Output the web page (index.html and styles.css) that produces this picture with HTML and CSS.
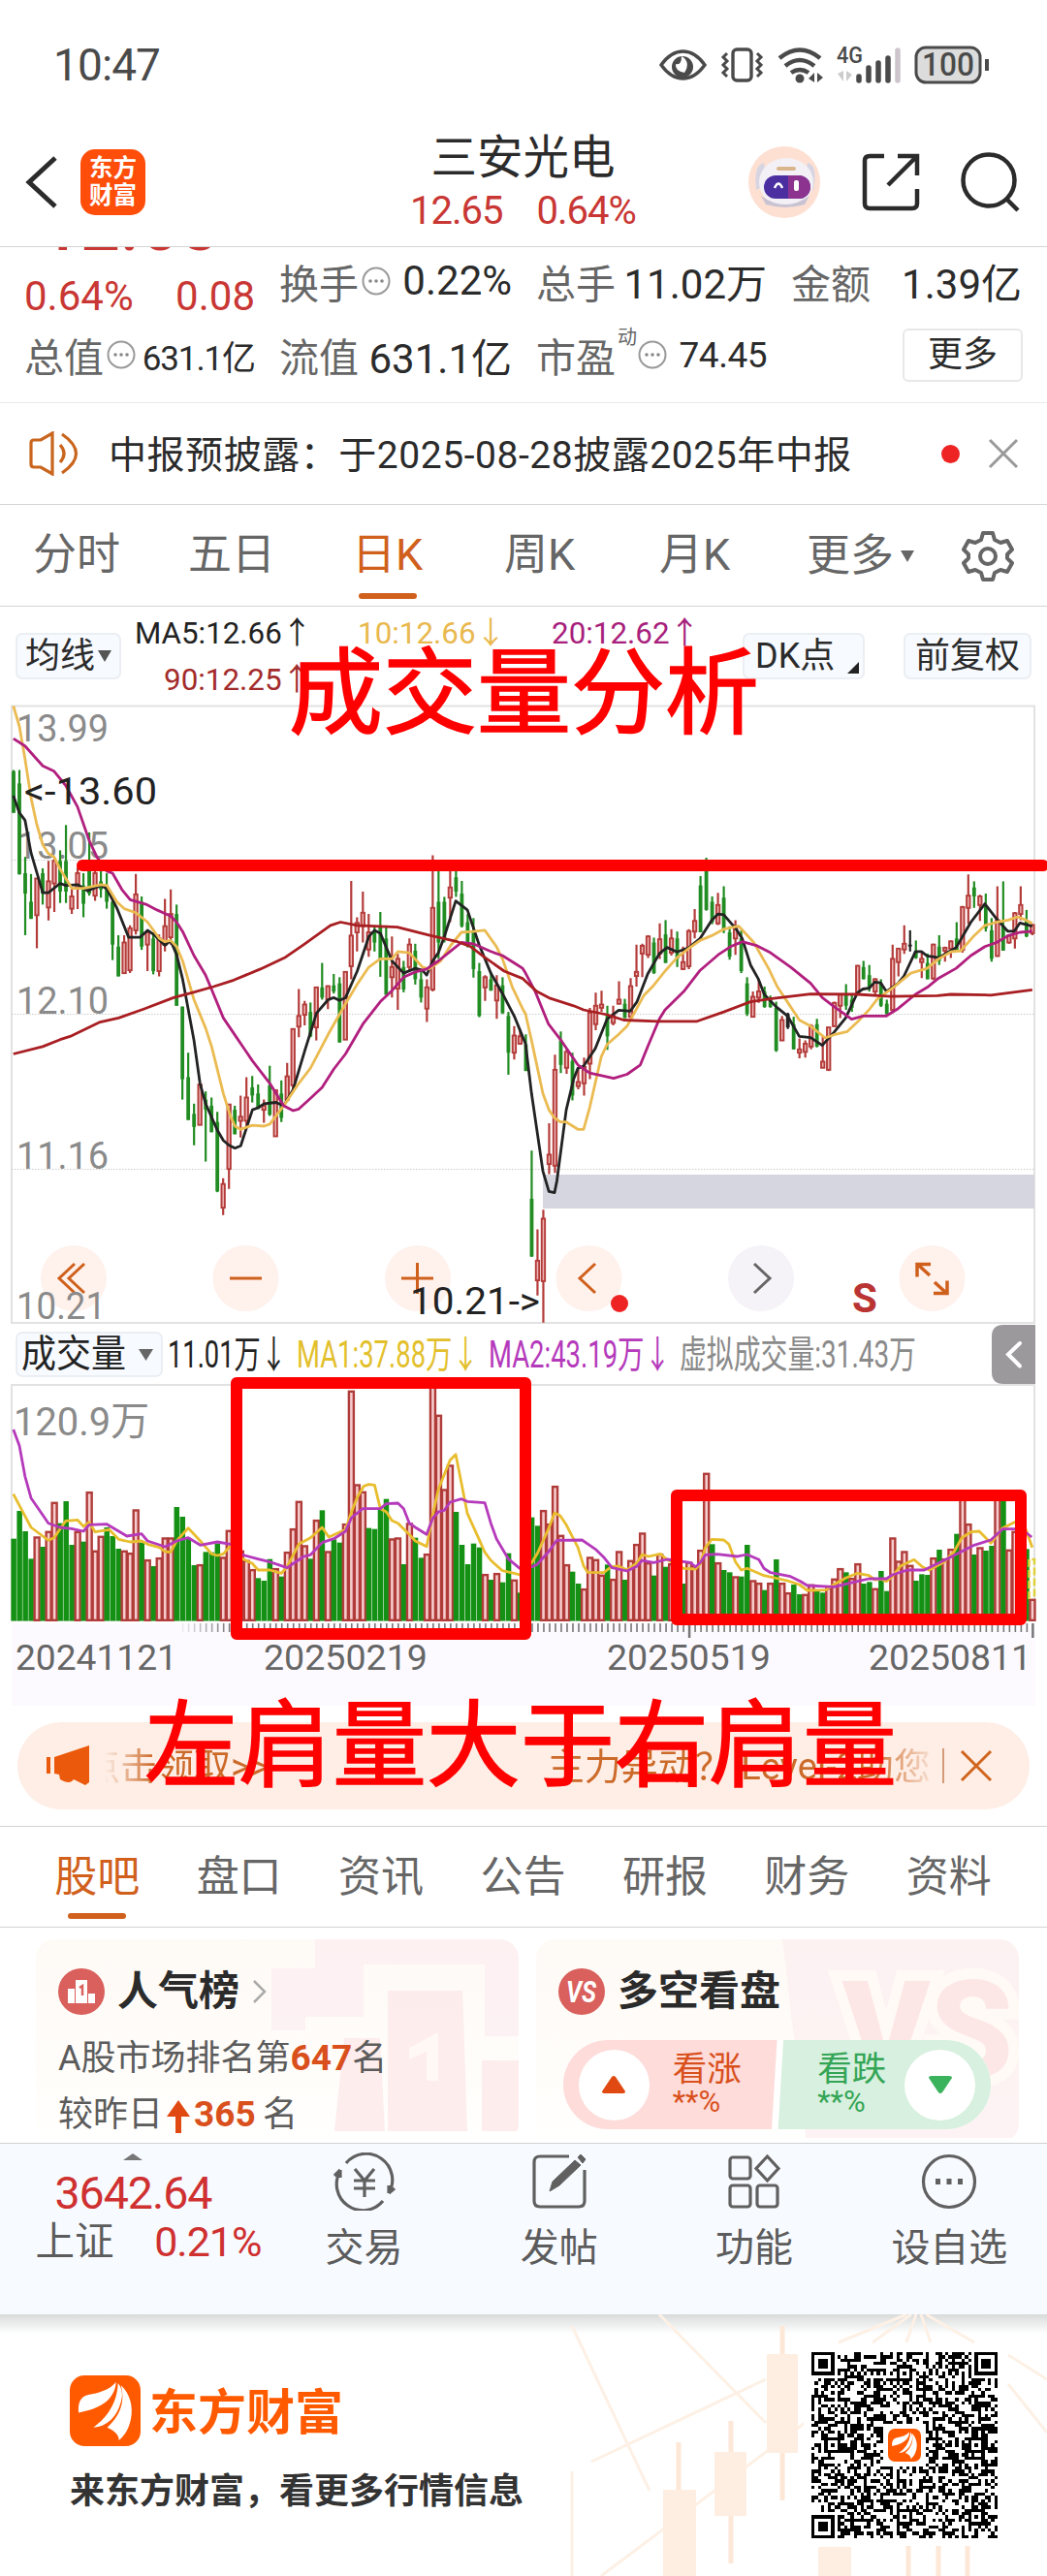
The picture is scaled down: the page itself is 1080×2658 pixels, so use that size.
FILE: index.html
```html
<!DOCTYPE html>
<html lang="zh-CN">
<head>
  <meta charset="utf-8">
  <title>三安光电 日K</title>
  <link rel="stylesheet" href="styles.css">
</head>
<body>

<svg class="defs" width="0" height="0">
  <symbol id="more-dots" viewBox="0 0 30 30">
    <circle cx="15" cy="15" r="13.5" fill="none" stroke="#999" stroke-width="2"/>
    <circle cx="9" cy="15" r="1.8" fill="#888"/><circle cx="15" cy="15" r="1.8" fill="#888"/><circle cx="21" cy="15" r="1.8" fill="#888"/>
  </symbol>
  <symbol id="east-logo" viewBox="0 0 72 72">
    <rect width="72" height="72" rx="15" fill="#ff5a00"/>
    <path d="M9 38 C8 30 10 22 18 20 C30 18 40 15 47 7 C46 24 32 34 9 38Z" fill="#fff"/>
    <path d="M24 53 C34 46 48 32 49 8 C54 14 54 21 52 27 C48 42 38 52 24 53Z" fill="#fff"/>
    <path d="M38 53 C50 42 57 28 52 10 C61 18 65 32 62 45 C60 54 56 61 50 66 C50 60 45 56 38 53Z" fill="#fff"/>
  </symbol>
</svg>

<div class="statusbar">
  <span class="clock">10:47</span>
  <svg width="344" height="44" viewBox="680 45 344 44">
    <g fill="none" stroke="#4a4a4a" stroke-width="3.4">
      <path d="M682 67 Q692 53 704.500 53 Q717 53 727 67 Q717 81 704.500 81 Q692 81 682 67Z"/>
      <rect x="756" y="51" width="19" height="32" rx="4"/>
      <path d="M750 55 l-4 4 4 4 -4 4 4 4 -4 4 4 4 M781 55 l4 4 -4 4 4 4 -4 4 4 4 -4 4" stroke-width="3"/>
      <path d="M804 60 Q825 43 846 60 M810 68 Q825 56 840 68 M816 75 Q825 69 834 75" stroke-width="4.500"/>
      <rect x="945" y="49" width="66" height="36" rx="10" fill="#dcdcdc" stroke-width="3"/>
      <path d="M1018 61 v12" stroke-width="4"/>
    </g>
    <circle cx="704" cy="69" r="11" fill="#4a4a4a"/>
    <path d="M703 58 q10 6 3 17 q-10 -2 -9 -9 q6 2 6 -8z" fill="#fff"/>
    <circle cx="825" cy="81" r="4.500" fill="#4a4a4a"/>
    <path d="M840 75 v10 l-6 -4z M843 75 v10 l6 -5z" fill="#4a4a4a"/>
    <text x="863" y="65" class="net" textLength="27" lengthAdjust="spacingAndGlyphs">4G</text>
    <path d="M870 73 v11 l-6 -8z M873 73 v11 l6 -7z" fill="#ccc"/>
    <path d="M886 79v4 M896 70v13 M906 65v18 M916 60v23" stroke="#4a4a4a" stroke-width="5.500" stroke-linecap="round"/>
    <path d="M926 52v31" stroke="#ccc6cc" stroke-width="5.500" stroke-linecap="round"/>
    <text x="951" y="78" class="batt" textLength="54" lengthAdjust="spacingAndGlyphs">100</text>
  </svg>
</div>

<header class="nav">
  <svg class="back" width="34" height="56" viewBox="0 0 34 56"><path d="M31 3 L4 28 L31 53" fill="none" stroke="#2b2b2b" stroke-width="5"/></svg>
  <div class="app-logo"><span>东方</span><span>财富</span></div>
  <div class="title">
    <div class="stock-name">三安光电</div>
    <div class="stock-sub"><span>12.65</span><span>0.64%</span></div>
  </div>
  <div class="nav-icons">
    <svg width="76" height="76" viewBox="0 0 76 76">
      <circle cx="38" cy="38" r="37" fill="#fde0d2"/>
      <path d="M9 46 q-3 -26 8 -28 l4 22z M68 46 q5 -26 -6 -28 l-5 22z" fill="#d8d5e2"/>
      <ellipse cx="40" cy="38" rx="28" ry="25" fill="#f4f1f6"/>
      <path d="M14 52 q25 18 50 0 l-5 9 q-20 6 -40 0z" fill="#c9c3d4"/>
      <rect x="30" y="22" width="20" height="4" rx="2" fill="#d9b58c"/>
      <rect x="17" y="31" width="48" height="24" rx="12" fill="#4b2fa0"/>
      <path d="M42 31 h11 a12 12 0 0 1 0 24 h-11z" fill="#8c3390"/>
      <path d="M28 44 q4 -9 8 0" fill="none" stroke="#fff" stroke-width="2.500"/>
      <rect x="48" y="36" width="5" height="11" rx="2" fill="#fff"/>
    </svg>
    <svg width="62" height="62" viewBox="0 0 62 62" fill="none" stroke="#2b2b2b" stroke-width="4.500">
      <path d="M24 4 H9 Q4 4 4 9 V53 Q4 58 9 58 H53 Q58 58 58 53 V38 M38 4 H58 V24 M58 4 L28 34"/>
    </svg>
    <svg width="62" height="62" viewBox="0 0 62 62" fill="none" stroke="#2b2b2b" stroke-width="4.500">
      <circle cx="29" cy="29" r="26.500"/><path d="M46 47 L59 60"/>
    </svg>
  </div>
</header>

<section class="quote">
  <div class="big-price">12.65</div>
  <div class="cells">
    <div class="cell up"><span class="pct">0.64%</span><span>0.08</span></div>
    <div class="cell top"><label>换手</label><svg class="dots"><use href="#more-dots"/></svg><b>0.22%</b></div>
    <div class="cell top"><label>总手</label><b>11.02万</b></div>
    <div class="cell top"><label>金额</label><b>1.39亿</b></div>
    <div class="cell"><label>总值</label><svg class="dots"><use href="#more-dots"/></svg><b class="small">631.1亿</b></div>
    <div class="cell"><label>流值</label><b>631.1亿</b></div>
    <div class="cell"><label>市盈<sup>动</sup></label><svg class="dots after-sup"><use href="#more-dots"/></svg><b class="pe">74.45</b></div>
    <div class="cell end"><button class="more">更多</button></div>
  </div>
</section>

<section class="notice">
  <svg width="54" height="46" viewBox="0 0 54 46" fill="none" stroke="#c9651d" stroke-width="3.200">
    <path d="M3 12 Q3 9 6 9 H13 L25 2 V44 L13 37 H6 Q3 37 3 34Z M33 14 Q41 23 33 32 M35 3 Q64 23 35 43"/>
  </svg>
  <p>中报预披露：于2025-08-28披露2025年中报</p>
  <i class="dot"></i>
  <svg width="32" height="32" viewBox="0 0 32 32"><path d="M2 2 L30 30 M30 2 L2 30" stroke="#999" stroke-width="3"/></svg>
</section>

<nav class="period">
  <a>分时</a><a>五日</a><a class="active">日K</a><a>周K</a><a>月K</a><a class="has-more">更多</a>
  <svg class="gear" width="54" height="54" viewBox="0 0 54 54" fill="none" stroke="#666" stroke-width="4" stroke-linejoin="round">
    <path d="M22 3 H32 L34 10 L40 13 L47 11 L52 20 L47 25 V29 L52 34 L47 43 L40 41 L34 44 L32 51 H22 L20 44 L14 41 L7 43 L2 34 L7 29 V25 L2 20 L7 11 L14 13 L20 10Z"/>
    <circle cx="27" cy="27" r="8"/>
  </svg>
</nav>

<section class="ma-row">
  <button class="chip ma-chip">均线<i class="tri"></i></button>
  <svg width="600" height="90" viewBox="130 632 600 90" class="legend">
    <text x="139" y="664" textLength="183" lengthAdjust="spacingAndGlyphs" fill="#222">MA5:12.66↑</text>
    <text x="369" y="664" textLength="153" lengthAdjust="spacingAndGlyphs" fill="#e9b84e">10:12.66↓</text>
    <text x="569" y="664" textLength="153" lengthAdjust="spacingAndGlyphs" fill="#a81f7c">20:12.62↑</text>
    <text x="169" y="712" textLength="153" lengthAdjust="spacingAndGlyphs" fill="#a32b2b">90:12.25↑</text>
  </svg>
  <button class="chip dk">DK点<i class="corner"></i></button>
  <button class="chip fq">前复权</button>
  <div class="mark mark-top">成交量分析</div>
</section>

<svg id="chart" width="1080" height="1037" viewBox="0 727 1080 1037"></svg>

<section class="promo">
  <svg width="48" height="42" viewBox="0 0 48 42" fill="#eb5a0c"><path d="M0 12h4v17H0z M8 12 L44 0 V38 L40 41 L28 35 Q24 41 14 35 L13 30 L8 29Z"/></svg>
  <div class="ticker"><span>点击领取&gt;&gt;</span><span>主力异动？ Level-2助您</span></div>
  <i class="bar"></i>
  <svg width="34" height="34" viewBox="0 0 34 34"><path d="M2 2 L32 32 M32 2 L2 32" stroke="#d0641c" stroke-width="3"/></svg>
  <div class="mark mark-bottom">左肩量大于右肩量</div>
</section>

<nav class="info-tabs">
  <a class="active">股吧</a><a>盘口</a><a>资讯</a><a>公告</a><a>研报</a><a>财务</a><a>资料</a>
</nav>

<section class="cards">
  <div class="card rank">
    <h3>
      <svg width="48" height="48" viewBox="0 0 48 48"><circle cx="24" cy="24" r="24" fill="#d9605c"/><path d="M10 21h7v15h-7z M31 26h7v10h-7z M18 12h12v24H18z" fill="#fff"/><path d="M22 20 l3 -2 v10" stroke="#d9605c" stroke-width="2.500" fill="none"/></svg>
      人气榜
      <svg width="16" height="26" viewBox="0 0 16 26"><path d="M2 2 L13 13 L2 24" fill="none" stroke="#aaa" stroke-width="2.500"/></svg>
    </h3>
    <p>A股市场排名第<b>647</b>名</p>
    <p class="second">较昨日<svg width="26" height="34" viewBox="0 0 26 34"><path d="M13 0 L25 17 H16 V34 H10 V17 H1Z" fill="#e04a12"/></svg><b>365</b>&thinsp;名</p>
    <svg class="art" width="260" height="205" viewBox="0 0 260 205">
      <path d="M50 0 h210 v100 h-35 v-74 h-125 v54 h-60 v14 h-35 v-64 h45z" fill="#fdeff1" opacity=".8"/>
      <path d="M125 53 h77 l5 145 h-82z M80 102 h37 l5 96 h-52z M222 125 h38 v73 h-38z" fill="#fde9e9" opacity=".8"/>
      <path d="M147 112 l30 -16 v50 h-12 v-30 l-18 8z" fill="#fff8f5"/>
    </svg>
  </div>
  <div class="card versus">
    <h3>
      <svg width="48" height="48" viewBox="0 0 48 48"><circle cx="24" cy="24" r="24" fill="#d9605c"/><text x="8" y="35" class="vs" textLength="31" lengthAdjust="spacingAndGlyphs">VS</text></svg>
      多空看盘
    </h3>
    <svg class="art" width="250" height="205" viewBox="0 0 250 205"><path d="M6 0h244v205H30z" fill="#fdf0f1" opacity=".8"/><text x="68" y="142" class="vs-big" textLength="176" lengthAdjust="spacingAndGlyphs">VS</text></svg>
    <div class="poll">
      <div class="half rise"><i><svg width="26" height="20"><path d="M11 2 Q13 0 15 2 L25 17 Q25 19 22 19 H4 Q1 19 1 17Z" fill="#e04a12"/></svg></i><span>看涨<small>**%</small></span></div>
      <div class="half fall"><span>看跌<small>**%</small></span><i><svg width="26" height="20"><path d="M11 18 Q13 20 15 18 L25 3 Q25 1 22 1 H4 Q1 1 1 3Z" fill="#3bb25c"/></svg></i></div>
    </div>
  </div>
</section>

<footer class="toolbar">
  <div class="index">
    <i></i>
    <strong>3642.64</strong>
    <div><span>上证</span><em>0.21%</em></div>
  </div>
  <a>
    <svg width="66" height="60" viewBox="0 0 66 60"><path d="M14 11 A27 27 0 0 1 58 42 M52 50 A27 27 0 0 1 8 19 M8 18 l-6 6 M8 18 v8 M58 42 l6 -5 M58 42 v-8 M23 17 l10 12 10 -12 M33 29 v17 M22 29 h22 M22 37 h22"/></svg>
    交易
  </a>
  <a>
    <svg width="60" height="60" viewBox="0 0 60 60"><path d="M40 4 H10 Q4 4 4 10 V50 Q4 56 10 56 H50 Q56 56 56 50 V18"/><path d="M20 40 L23 30 L46 8 L52 13 L30 34Z M49 5 l3 -3 5 5 -3 4z" fill="#606060" stroke-width="1"/></svg>
    发帖
  </a>
  <a>
    <svg width="60" height="60" viewBox="0 0 60 60"><rect x="5" y="5" width="21" height="22" rx="3"/><rect x="5" y="34" width="21" height="22" rx="3"/><rect x="33" y="34" width="21" height="22" rx="3"/><path d="M43.500 4 L55 16.500 L43.500 29 L32 16.500Z"/></svg>
    功能
  </a>
  <a>
    <svg width="60" height="60" viewBox="0 0 60 60"><circle cx="30" cy="30" r="26.500"/><path d="M16 30h5 M27.500 30h5 M39 30h5" stroke-width="6"/></svg>
    设自选
  </a>
</footer>

<section class="brand">
  <svg class="brand-art" width="500" height="270" viewBox="580 2388 500 270">
    <g stroke="#fdf0e5" stroke-width="3" fill="none">
      <path d="M680 2388 L790 2500 M590 2400 L670 2570 M610 2540 L790 2455 M590 2550 V2658 M620 2658 L830 2500 M1040 2430 L1080 2455 M1040 2460 L1080 2510 M935 2388 L865 2417 M940 2388 L900 2417 M945 2388 L935 2417 M950 2388 L960 2417 M955 2388 L1005 2417"/>
      <path d="M807 2400 V2580 M754 2498 V2645 M700 2520 V2658 M937 2625 V2658 M968 2625 V2658 M998 2625 V2658" stroke-width="5" stroke="#fde8d8"/>
    </g>
    <path d="M791 2429h32v102h-32z M737 2530h33v66h-33z M684 2569h34v89h-34z M844 2628h34v30h-34z" fill="#feeee2"/>
  </svg>
  <div class="brand-text">
    <div class="brand-name"><svg width="73" height="73"><use href="#east-logo"/></svg><span>东方财富</span></div>
    <p>来东方财富，看更多行情信息</p>
  </div>
  <svg id="qr" width="208" height="208" viewBox="0 0 208 208"></svg>
</section>

<script src="chart.js"></script>
</body>
</html>
```
FILE: styles.css
```css
body {
  margin: 0;
  width: 1080px;
  height: 2658px;
  background: #fff;
  overflow: hidden;
  font-family: Roboto, "Noto Sans CJK SC", sans-serif;
  color: #2b2b2b;
}

svg {
  display: block;
  flex: none;
}

button {
  font-family: inherit;
  color: #2b2b2b;
  padding: 0;
}

.defs { position: absolute; }

.statusbar {
  height: 134px;
  box-sizing: border-box;
  padding: 0 56px 0 55px;
  display: flex;
  align-items: center;
  justify-content: space-between;
}

.clock {
  font-size: 46px;
  letter-spacing: -.9px;
  color: #4a4a4a;
}

.net { font-size: 23px; font-weight: 500; fill: #4a4a4a; }
.batt { font-size: 34px; font-weight: 500; fill: #4a4a4a; }

.nav {
  height: 121px;
  display: flex;
  align-items: center;
  border-bottom: 1px solid #d4d4d4;
  box-sizing: border-box;
  padding: 0 27px 12px 26px;
  position: relative;
  z-index: 1;
  background: #fff;
}

.back { margin-right: 23px; }

.app-logo {
  width: 67px;
  height: 68px;
  border-radius: 15px;
  background: #ff4d0a;
  color: #fff;
  font-size: 24.500px;
  font-weight: bold;
  line-height: 28px;
  display: flex;
  flex-direction: column;
  align-items: center;
  justify-content: center;
}

.title {
  flex: 1;
  text-align: center;
  padding: 3px 0 0 158px;
}

.stock-name {
  font-size: 47.500px;
  line-height: 56px;
}

.stock-sub {
  display: flex;
  justify-content: center;
  gap: 35px;
  font-size: 40px;
  line-height: 54px;
  letter-spacing: -1px;
  color: #c93734;
}

.nav-icons {
  display: flex;
  align-items: center;
  gap: 41px;
}

.quote {
  height: 161px;
  border-bottom: 1px solid #e9e9e9;
  box-sizing: border-box;
  overflow: hidden;
}

.big-price {
  height: 5px;
  line-height: 5px;
  margin-left: 42px;
  font-size: 72px;
  font-weight: 500;
  color: #c93734;
  position: relative;
  top: -24px;
}

.cells {
  display: grid;
  grid-template-columns: 238px 240px 238px 238px;
  grid-template-rows: 69px 74px;
  column-gap: 25px;
  padding-left: 25px;
}

.cell {
  display: flex;
  align-items: center;
  justify-content: space-between;
  font-size: 41px;
  color: #2b2b2b;
}

.cell label { color: #666; position: relative; }
.cell b { font-weight: normal; font-size: 42px; }
.cell .small { font-size: 35px; letter-spacing: -1.1px; }
.cell .pe { font-size: 37px; letter-spacing: -.5px; }
.cell.top { padding-bottom: 10px; }
.cell.up { color: #c93734; padding-top: 21px; font-size: 42px; }
.cell.end { justify-content: flex-end; }

.cell sup {
  position: absolute;
  right: -22px;
  top: -4px;
  font-size: 20px;
}

.cell .dots {
  width: 30px;
  height: 30px;
  margin-right: auto;
  margin-left: 3px;
}

.cell .after-sup { margin-left: 23px; }

.more {
  width: 124px;
  height: 55px;
  border: 2px solid #e8e8e8;
  border-radius: 6px;
  background: #fff;
  font-size: 36px;
  line-height: 48px;
  margin-right: -1px;
}

.notice {
  height: 105px;
  box-sizing: border-box;
  border-bottom: 1px solid #d4d4d4;
  display: flex;
  align-items: center;
  padding: 0 29px;
}

.notice p {
  margin: -5px 0 0 29px;
  font-size: 39px;
  white-space: nowrap;
  letter-spacing: .55px;
}

.dot {
  width: 19px;
  height: 19px;
  border-radius: 50%;
  background: #ee2424;
  margin: 0 29px 0 auto;
}

.period {
  height: 105px;
  box-sizing: border-box;
  border-bottom: 1px solid #d4d4d4;
  display: grid;
  grid-template-columns: 160px 169px 157px 160px 152px 160px auto;
  align-items: center;
  justify-items: start;
  padding-left: 34px;
  font-size: 45px;
  color: #666;
}

.period a {
  height: 105px;
  line-height: 104px;
}

.period .has-more {
  display: flex;
  align-items: center;
}

.has-more::after {
  content: "";
  border: 7px solid transparent;
  border-top: 12px solid #666;
  border-bottom: 0;
  margin-left: 7px;
}

.active {
  color: #d0601c;
  position: relative;
}

.active::after {
  content: "";
  position: absolute;
  left: 50%;
  bottom: 8px;
  width: 60px;
  height: 6px;
  margin-left: -30px;
  border-radius: 3px;
  background: #d0601c;
}

.ma-row {
  height: 101px;
  display: flex;
  align-items: flex-start;
  position: relative;
  padding-left: 16px;
}

.chip {
  margin-top: 27px;
  height: 48px;
  border: 2px solid #ebeef2;
  border-radius: 7px;
  background: #f7faff;
  font-size: 36px;
  line-height: 44px;
  white-space: nowrap;
  box-sizing: border-box;
  position: relative;
}

.ma-chip {
  width: 109px;
  display: flex;
  align-items: center;
  justify-content: center;
  gap: 3px;
}

.tri {
  border: 7px solid transparent;
  border-top: 12px solid #555;
  border-bottom: 0;
}

.legend {
  margin: 6px 0 0 5px;
  font-size: 32px;
}

.dk {
  width: 126px;
  margin-left: 36px;
  text-align: left;
  padding-left: 11px;
}

.corner {
  position: absolute;
  right: 4px;
  bottom: 4px;
  border-left: 12px solid transparent;
  border-bottom: 12px solid #222;
}

.fq { width: 132px; margin-left: 40px; }

.mark {
  position: absolute;
  color: #f00;
  font-size: 97px;
  line-height: 100px;
  white-space: nowrap;
  z-index: 3;
  -webkit-text-stroke: 1.500px #f00;
}

.mark-top { left: 298px; top: 40px; }
.mark-bottom { left: 131px; top: -25px; }

#chart { font-family: Roboto, "Noto Sans CJK SC", sans-serif; }
#chart .axis { font-size: 39px; fill: #8a8a8a; }
#chart .big { font-size: 41px; }
#chart .tip { font-size: 39px; fill: #222; }
#chart .vol { font-size: 39px; }
#chart .date { font-size: 37px; fill: #666; }
#chart .sell { font-size: 42px; font-weight: bold; fill: #b93432; }

.promo {
  margin: 13px 18px 0;
  height: 90px;
  border-radius: 45px;
  background: #feeee6;
  display: flex;
  align-items: center;
  padding: 0 38px 0 30px;
  position: relative;
}

.ticker {
  flex: 1;
  margin: -5px 12px 0;
  display: flex;
  justify-content: space-between;
  overflow: hidden;
  font-size: 38px;
  color: #cc6a2a;
  -webkit-mask-image: linear-gradient(90deg, transparent, #000 50px, #000 790px, transparent 860px);
}

.ticker span { white-space: nowrap; }
.ticker span:first-child { margin-left: -22px; }

.bar {
  width: 2px;
  height: 36px;
  background: #d59a78;
  margin-right: 16px;
}

.info-tabs {
  margin-top: 17px;
  height: 105px;
  box-sizing: border-box;
  border-top: 1px solid #d4d4d4;
  border-bottom: 1px solid #d4d4d4;
  padding: 0 28px 0 27px;
  display: flex;
  font-size: 44px;
  color: #666;
}

.info-tabs a {
  flex: 1;
  text-align: center;
  line-height: 104px;
}

.cards {
  height: 223px;
  box-sizing: border-box;
  padding: 12px 28px 0 37px;
  display: flex;
  gap: 18px;
  border-bottom: 1px solid #cfd0d4;
  overflow: hidden;
}

.card {
  width: 498px;
  height: 210px;
  border-radius: 20px;
  background: linear-gradient(180deg, #fefaf6, #fffdfa 70%, #fff);
  box-sizing: border-box;
  padding: 23px 23px 0;
  position: relative;
  overflow: hidden;
}

.card h3 {
  margin: 0 0 19px;
  font-size: 42px;
  line-height: 62px;
  display: flex;
  align-items: center;
  gap: 13px;
  position: relative;
  z-index: 1;
}

.card p {
  margin: 0;
  font-size: 36px;
  line-height: 38px;
  color: #5c5c5c;
  display: flex;
  align-items: center;
  position: relative;
  z-index: 1;
}

.card .second { margin-top: 19px; }
.card p b { color: #d9501c; font-size: 37px; }
.card p svg { margin: 5px 3px 0; }

.art {
  position: absolute;
  right: 0;
  top: 0;
}

.vs { font-size: 31px; font-weight: bold; font-style: italic; fill: #fff; }

.vs-big {
  font-size: 140px;
  font-weight: 900;
  fill: #fde6e6;
  stroke: #fffaf5;
  stroke-width: 22px;
  paint-order: stroke;
}

.poll {
  position: relative;
  z-index: 1;
  width: 441px;
  height: 92px;
  margin: 3px 0 0 5px;
  border-radius: 46px;
  overflow: hidden;
  display: flex;
  background: #fff;
}

.half {
  width: 221px;
  display: flex;
  align-items: center;
  justify-content: center;
  gap: 24px;
  box-sizing: border-box;
  font-size: 35.500px;
}

.half span { line-height: 38px; margin-top: -3px; }
.half small { display: block; font-size: 31px; line-height: 30px; }
.half i {
  width: 73px;
  height: 73px;
  border-radius: 50%;
  background: #fff;
  display: flex;
  align-items: center;
  justify-content: center;
}

.rise { background: #fddcda; color: #d9501c; padding-right: 21px; clip-path: polygon(0 0, 100% 0, 97.500% 100%, 0 100%); }
.fall { background: #d8f0df; color: #34a556; padding-left: 26px; gap: 19px; clip-path: polygon(3% 0, 100% 0, 100% 100%, .5% 100%); }

.toolbar {
  height: 176px;
  background: #f7faff;
  display: flex;
  color: #5c5c5c;
}

.index {
  width: 275px;
  display: flex;
  flex-direction: column;
  align-items: center;
  color: #cf3030;
}

.index i {
  border: 10px solid transparent;
  border-top: 0;
  border-bottom: 7px solid #777;
  margin-top: 10px;
}

.index strong {
  font-weight: normal;
  font-size: 46.500px;
  line-height: 58px;
  letter-spacing: -1px;
  margin-top: 5px;
}

.index div {
  width: 233px;
  margin-left: 31px;
  display: flex;
  justify-content: space-between;
  font-size: 40.500px;
  line-height: 43px;
}

.index span { color: #5c5c5c; }
.index em { font-style: normal; font-size: 43px; letter-spacing: -1px; }

.toolbar a {
  width: 201.300px;
  display: flex;
  flex-direction: column;
  align-items: center;
  font-size: 40px;
  line-height: 48px;
  padding-top: 9px;
}

.toolbar a svg {
  fill: none;
  stroke: #606060;
  stroke-width: 3.200;
  margin-bottom: 15px;
}

.brand {
  height: 270px;
  background: linear-gradient(180deg, #d9dbdb, #fff 20px);
  display: flex;
  justify-content: space-between;
  position: relative;
}

.brand-art {
  position: absolute;
  right: 0;
  top: 0;
}

.brand-text { padding: 63px 0 0 72px; }

.brand-name {
  display: flex;
  align-items: center;
  gap: 9px;
  font-size: 50px;
  font-weight: bold;
  color: #ff5a00;
  height: 73px;
}

.brand-name span { margin-top: -5px; }

.brand p {
  margin: 17px 0 0;
  font-size: 36px;
  font-weight: bold;
  color: #333;
}

#qr {
  margin: 31px 43px 0 0;
  position: relative;
}
```
FILE: chart.js
```js
const X0 = 14, STEP = 6.005;
const LX = 2.9037, LY = 2.3758;

// price bars: colour (g/r/k), high, top, bottom, low
const bars = `g177,180,282,282 g177,210,433,433 g390,430,480,582 g432,500,542,542 r443,443,533,614 g418,430,480,507 r400,450,514,546 r395,400,455,525
g374,400,475,503 g312,400,475,503 r468,487,517,530 r415,430,465,518 g430,460,505,538 g330,400,480,485 r425,430,485,498 g425,450,470,490
g430,460,500,517 g495,500,605,643 g582,610,683,683 r582,600,675,675 r558,565,668,675 r432,482,570,580 g487,500,610,618 r568,575,605,670
g575,590,670,678 r580,590,670,683 r493,560,605,622 r470,530,587,605 g507,530,755,755 g757,757,935,985 g870,930,1035,1035 g995,1020,1052,1097
r948,948,1047,1047 g965,985,1010,1137 g980,1000,1065,1065 g1015,1040,1210,1212 r1178,1192,1250,1268 r997,997,1155,1204 g1000,1010,1070,1070 r975,1027,1037,1078
r930,980,1037,1050 g927,955,975,992 g948,970,1008,1008 r985,1000,1010,1042 g902,950,1022,1025 r962,962,1075,1075 g938,970,1030,1040 r895,928,985,990
r812,812,950,960 r714,780,806,832 r743,752,777,803 g747,770,830,832 r710,710,808,840 g650,710,735,740 r705,707,740,763 g677,705,720,725
g685,700,845,845 r672,672,838,838 r449,583,658,690 r538,552,575,622 r475,527,560,600 r530,575,617,635 g560,575,600,622 g525,560,640,684
g558,590,728,728 r585,660,685,735 r628,640,713,765 g645,660,715,722 r590,605,660,672 g603,620,690,703 g670,690,735,747 r690,710,762,795
r386,515,715,720 g425,500,600,640 g488,500,590,600 r425,465,490,550 g398,440,475,488 g449,480,560,563 g530,550,605,612 g540,570,665,686
g650,670,780,783 r680,685,710,743 g672,690,718,718 r680,705,742,787 g685,705,773,775 g770,780,870,924 r805,828,870,887 r812,830,848,850
g825,850,915,915 g1110,1228,1370,1370 r1303,1380,1428,1465 r1255,1277,1430,1532 r1043,1120,1143,1168 r875,912,1147,1165 g818,840,900,920 r862,868,907,922
g870,890,975,987 r905,942,952,960 r882,905,945,975 r760,772,897,935 r723,755,800,815 r718,752,760,770 g755,775,830,863 r755,780,797,803
r695,740,750,752 g738,750,785,785 r687,707,782,785 r605,672,682,708 r603,608,627,685 r582,585,630,638 g588,600,675,677 r553,592,627,640
g545,580,650,650 r567,590,625,632 g573,590,640,660 r610,648,665,667 r567,572,658,665 r518,547,573,590 g437,460,575,575 g392,420,520,522
g487,500,550,555 r478,508,553,557 g462,490,570,577 g560,575,635,642 r545,560,590,630 g570,590,670,675 g685,700,775,780 r720,733,782,782
r690,720,735,748 g708,720,758,760 g730,740,758,760 g745,760,865,868 r780,790,840,840 k772,775,808,812 g782,800,862,862 r835,862,870,884
r840,848,868,882 r800,805,855,862 g787,800,855,857 r830,892,907,907 r808,808,912,915 r745,748,805,807 r725,727,755,785 g702,725,755,765
g725,740,760,770 r655,657,725,727 g645,660,690,690 g655,680,712,720 r687,690,720,727 g690,700,755,758 g740,750,775,780 r605,640,765,770
r613,615,648,683 r558,603,617,628 k570,605,608,622 g595,620,638,640 r622,640,648,687 g627,650,690,690 r603,605,688,692 g582,610,645,655
r610,613,620,647 r595,597,615,638 g550,590,620,620 r510,513,618,625 r433,485,515,555 g450,465,487,515 r483,487,508,547 g480,510,565,573
g540,570,640,647 r462,545,633,635 g450,560,620,620 r580,583,600,603 r525,528,590,615 r462,508,530,545 g520,545,585,587 r555,557,577,582`.split(/\s+/);

// volume bar tops
const vols = `g683 g597 g660 g745 r677 g708 r660 r570 g635 g567 g702 r660 g692 r538 r720 r675 g648 g675 g714 r720 r727 r593 g695 r748 g768 r742 r680 r680 g585 g615 g680 g765
r763 g724 g725 g698 r740 r657 g700 r720 r750 r778 g805 g813 g746 r775 g800 r724 r652 r567 r704 g745 r625 g595 r722 g685 g695 r637 r225 r515 r537 g650 g653 g590
g560 r683 r680 g762 r635 g680 g742 r730 r207 r300 r530 r455 g600 g702 g762 g698 g710 r793 g810 r790 g818 g728 r810 g850 g760 g617 g643 r595 r637 r520 r672 r763
g785 g822 r838 r740 r747 r795 g763 r808 r722 g810 r750 r700 r665 r757 g797 r730 g770 r760 r750 g822 r755 r768 r718 r480 g700 r757 g780 g787 r800 g800 g702 r812
r820 g842 r820 g747 r820 r850 g825 g855 r855 r825 g845 g850 r835 r807 r775 g787 r805 r760 g822 g817 r837 g783 g845 r680 r752 r722 r765 g813 g793 g795 r742 g717
r745 r715 g668 r545 r637 g732 r710 g720 g705 r540 g545 r717 r660 r680 g715 r870`.split(/\s+/);

// each line is two halves, the right half starts at x = 540
const priceLines = [
  ['#232323', '40,240 58,282 75,300 93,380 128,478 145,478 180,455 197,460 232,458 262,473 302,460 320,468 350,515 385,587 420,587 442,570 460,580 494,607 511,595 529,630 547,690 581,840 599,945 616,995 651,1060 669,1085 686,1097 704,1104 721,1098 756,1010 773,1005 791,995 826,992 850,1000 878,960 913,865 948,773 983,740 1000,735 1017,742 1035,735 1070,670 1105,585 1122,570 1139,577 1174,645 1209,675 1244,663 1265,668 1278,680 1296,645 1313,625 1331,585 1365,498 1400,520 1435,605 1470,675 1505,725 1540,780 1565,830',
    '6,848 24,970 58,1160 76,1210 93,1213 100,1185 128,1010 150,935 163,908 180,903 215,860 250,788 285,766 320,768 340,745 372,677 407,627 430,612 460,623 494,613 529,590 564,545 583,530 600,532 635,565 655,590 680,655 704,690 721,727 756,757 791,780 826,830 860,833 895,852 930,820 965,785 1000,723 1017,714 1035,712 1052,697 1070,699 1087,720 1122,700 1139,683 1174,622 1192,622 1209,633 1244,637 1296,612 1340,550 1382,505 1417,542 1450,572 1470,572 1487,552 1524,560'],
  ['#ebbb52', '40,20 58,70 75,150 93,245 110,310 128,360 145,382 162,390 180,420 215,467 250,467 302,458 320,460 350,500 372,517 407,527 442,550 477,590 494,598 511,595 529,610 547,645 581,740 616,810 634,855 669,970 690,1025 704,1050 720,1058 756,1048 791,1050 808,1045 850,1000 895,945 930,908 983,825 1035,750 1070,702 1105,660 1139,640 1174,640 1192,622 1226,625 1265,660 1285,665 1320,645 1350,607 1382,575 1417,573 1452,570 1487,610 1505,640 1535,710 1565,762',
    '6,775 24,840 58,970 76,1010 93,1030 110,1040 128,1040 163,1058 180,1058 198,1005 233,880 250,850 285,825 310,805 360,730 390,705 424,670 460,637 494,615 529,595 564,583 600,567 645,560 690,600 735,665 760,708 790,745 826,790 860,805 904,834 930,826 970,818 1000,795 1035,765 1060,738 1105,712 1160,675 1209,663 1244,640 1280,623 1310,620 1350,583 1382,558 1417,550 1452,545 1480,537 1505,545 1524,553'],
  ['#b11f7e', '40,100 75,118 128,167 162,180 197,215 232,267 267,350 290,390 320,425 337,430 365,470 390,495 440,507 470,520 511,535 529,550 547,573 581,632 616,680 634,715 669,785 704,827 756,890 808,945 850,1000 878,1012 895,1008 930,982 965,955 1000,910 1035,873 1087,800 1139,745 1174,718 1209,685 1244,672 1278,665 1313,645 1348,622 1382,600 1417,603 1470,622 1505,632 1550,655 1565,663',
    '6,675 35,720 75,800 110,837 163,900 198,920 270,933 310,923 350,900 372,855 407,787 424,765 480,720 529,668 583,630 620,610 655,598 700,608 740,625 800,660 860,700 895,735 930,757 983,788 1017,780 1087,780 1122,762 1174,727 1209,710 1244,687 1296,663 1340,632 1382,610 1417,600 1452,583 1487,575 1524,572'],
  ['#a81e22', '40,873 128,855 180,838 210,830 300,795 355,785 430,763 520,735 580,722 640,708 700,692 780,665 855,636 910,605 990,558 1020,550 1070,558 1190,562 1290,583 1370,598 1410,610 1450,635 1510,670 1565,688',
    '6,695 40,720 80,737 150,755 180,765 250,777 300,790 400,793 520,793 600,770 680,745 750,737 860,726 1000,727 1100,732 1240,730 1280,727 1400,729 1524,716']
];

const volLines = [
  ['#e8bd2e', '40,545 58,580 93,648 128,675 145,688 162,680 197,628 232,625 250,645 267,632 285,662 327,655 355,685 390,693 424,690 442,700 477,710 494,723 511,725 529,690 564,650 600,690 634,730 651,735 669,730 690,705 726,745 756,760 773,780 808,780 843,790 860,770 895,700 930,680 965,648 985,678 1035,655 1053,600 1070,555 1090,520 1105,515 1122,517 1139,590 1157,600 1174,627 1192,635 1226,670 1244,690 1278,707 1296,610 1313,530 1348,440 1365,422 1382,510 1400,605 1435,685 1452,725 1470,750 1505,782 1540,790 1557,795',
    '25,757 41,730 76,650 93,603 110,612 128,640 163,710 180,767 192,787 240,788 263,770 285,768 310,780 340,758 355,732 375,738 410,730 430,748 480,775 515,777 530,760 545,710 564,685 600,687 615,700 635,755 652,780 670,775 720,797 790,813 826,825 850,843 905,842 930,825 965,805 1000,790 1035,797 1052,810 1070,808 1087,815 1105,800 1130,767 1170,748 1195,770 1215,780 1260,755 1290,722 1313,680 1340,662 1365,660 1400,697 1435,650 1475,630 1505,655 1524,710'],
  ['#b53abb', '40,345 58,395 75,490 93,557 128,610 145,635 180,648 215,652 250,660 267,640 320,638 380,675 424,668 442,690 495,708 529,690 564,680 600,703 651,693 690,700 726,733 770,745 808,755 860,773 910,738 930,733 965,695 1000,683 1035,660 1053,618 1087,590 1139,590 1157,575 1192,573 1209,590 1226,635 1244,648 1278,670 1296,620 1313,600 1331,595 1348,570 1382,560 1400,568 1452,572 1470,635 1487,683 1522,745 1557,775',
    '25,770 41,763 76,722 100,688 175,687 215,715 240,740 265,773 310,783 340,768 355,750 390,757 430,747 500,757 515,770 530,757 545,733 580,731 640,738 670,732 705,748 720,775 740,788 800,800 830,815 850,828 930,832 1000,815 1035,807 1087,807 1105,795 1150,780 1200,780 1260,750 1313,722 1350,703 1400,687 1435,653 1475,653 1500,660 1522,678']
];

const py = v => 720 + v / LY;
const vy = v => 1360 + v / 3;

function points(left, right, fy) {
  const conv = (s, off) => s.split(' ').map(p => {
    const [x, y] = p.split(',').map(Number);
    return (off + x / LX).toFixed(1) + ',' + fy(y).toFixed(1);
  });
  return conv(left, 0).concat(conv(right, 540)).join(' ');
}

function text(x, y, cls, str, len, fill) {
  return `<text x="${x}" y="${y}" class="${cls}" textLength="${len}" lengthAdjust="spacingAndGlyphs"${fill ? ` fill="${fill}"` : ''}>${str}</text>`;
}

let s = '';

// frames and grid
s += '<rect x="12" y="1675" width="1056" height="85" fill="#fdfaff"/>';
s += '<path d="M12 1365V728.500H1067V1365Z M12 1672V1429H1067V1672Z" fill="none" stroke="#e2e2e2" stroke-width="2"/>';
s += '<path d="M12 887.500H1067 M12 1046.500H1067 M12 1206.500H1067" stroke="#ccc" stroke-dasharray="1.500 1.500"/>';

// floating controls under the price chart
[76, 253.5, 431, 607.5, 785, 961.5].forEach((x, i) => {
  s += `<circle cx="${x}" cy="1319" r="34" fill="${i == 4 ? '#f6f3f8' : '#fff1ec'}"/>`;
});
s += `<g fill="none" stroke="#cf601c" stroke-width="3">
  <path d="M77 1304l-16 15 16 15 M87 1304l-16 15 16 15 M237 1319h33 M414 1319h33 M430.500 1303v32 M614 1304l-16 15 16 15"/>
  <path d="M778 1304l16 15 -16 15" stroke="#666"/>
  <path d="M960 1304.500h-14v13 M947 1305l12 11 M964 1323l12 11 M963 1334.500h14v-13" stroke-width="3.500"/></g>`;

s += '<rect x="560" y="1212" width="507" height="35" fill="#d5d6df"/>';

[['13.99', 765], ['13.05', 886], ['12.10', 1046], ['11.16', 1206], ['10.21', 1361]].forEach(([t, y]) => {
  s += text(17, y, 'axis', t, t == '10.21' ? 92 : 95);
});

bars.forEach((b, i) => {
  const x = X0 + i * STEP;
  const [h, t, o, l] = b.slice(1).split(',').map(v => py(+v));
  const c = { g: '#218c22', r: '#b33c3a', k: '#222' }[b[0]];
  s += `<path d="M${x} ${h}V${b[0] == 'r' ? t : l}${b[0] == 'r' ? `M${x} ${o}V${l}` : ''}" stroke="${c}" stroke-width="2.200"/>`;
  if (b[0] == 'r') s += `<rect x="${x - 1.7}" y="${t}" width="3.400" height="${Math.max(2, o - t)}" fill="#eeb5b4" stroke="${c}" stroke-width="1.900"/>`;
  else s += `<rect x="${x - 1.9}" y="${t}" width="3.800" height="${Math.max(2, o - t)}" fill="${c}"/>`;
});

priceLines.forEach(([c, a, b]) => {
  s += `<polyline points="${points(a, b, py)}" fill="none" stroke="${c}" stroke-width="2.800" stroke-linejoin="round"/>`;
});

s += text(25, 830, 'tip', '&lt;-13.60', 137);
s += text(423, 1356, 'tip', '10.21-&gt;', 134);
s += '<circle cx="639" cy="1345" r="9" fill="#ee2424"/><text x="879" y="1354" class="sell">S</text>';

// volume header
s += '<rect x="17" y="1375" width="150" height="45" rx="6" fill="#f7faff" stroke="#e6eaf0" stroke-width="1.500"/>';
s += text(22, 1410, 'vol', '成交量', 108, '#222');
s += '<path d="M143 1392h15l-7.500 12z" fill="#666"/>';
s += text(173, 1411, 'vol', '11.01万↓', 123, '#222');
s += text(306, 1411, 'vol', 'MA1:37.88万↓', 188, '#e3bf2c');
s += text(504, 1411, 'vol', 'MA2:43.19万↓', 188, '#b53abb');
s += text(701, 1411, 'vol', '虚拟成交量:31.43万', 244, '#8a8a8a');
s += '<path d="M1068 1367H1035Q1023 1367 1023 1379V1416Q1023 1428 1035 1428H1068Z" fill="#9b999c"/><path d="M1052 1386l-12 11.500 12 12" fill="none" stroke="#fff" stroke-width="4" stroke-linecap="round"/>';

// volume bars
vols.forEach((v, i) => {
  const x = X0 + i * STEP, y = vy(+v.slice(1));
  if (v[0] == 'g') s += `<rect x="${x - 2.6}" y="${y}" width="5.500" height="${1672.5 - y}" fill="#149114"/>`;
  else s += `<rect x="${x - 2.4}" y="${y + .8}" width="5" height="${1671 - y}" fill="#f6cccc" stroke="#b03c3a" stroke-width="2.400"/>`;
});
s += '<path d="M1061.500 1650V1609H1067V1650" fill="none" stroke="#dfd03a" stroke-width="2.500" stroke-dasharray="8 3"/>';
volLines.forEach(([c, a, b]) => {
  s += `<polyline points="${points(a, b, vy)}" fill="none" stroke="${c}" stroke-width="2.800" stroke-linejoin="round"/>`;
});
s += text(14, 1481, 'axis big', '120.9万', 140);

// time axis ticks
for (let i = 29; i < 176; i++) {
  const long = i == 116 || i == 175;
  s += `<path d="M${X0 + i * STEP + .5} 1675v${long ? 15 : 9}" stroke="#777" stroke-width="${long ? 2.5 : 1.6}" opacity="${Math.min(1, (i - 28) / 9)}"/>`;
}
[['20241121', 16, 167], ['20250219', 272, 169], ['20250519', 626, 169], ['20250811', 896, 168]].forEach(([t, x, l]) => {
  s += text(x, 1723, 'date', t, l);
});

// hand-drawn annotations
s += `<g fill="none" stroke="#f00" stroke-width="12" stroke-linejoin="round">
  <path d="M85 893H1076" stroke-linecap="round"/>
  <rect x="244" y="1427" width="298" height="259"/>
  <rect x="698" y="1543" width="355" height="128"/></g>`;

document.querySelector('#chart').innerHTML = s;

// QR code, 57 x 57 modules
const N = 57, M = 192 / N;
let seed = 20250811, q = '<rect width="208" height="208" fill="#fff"/><path d="';
const rnd = () => (seed = (seed * 1103515245 + 12345) % 2147483648) / 2147483648;
const finder = (r, c) => {
  const d = Math.max(Math.abs(r - 3), Math.abs(c - 3));
  return d == 3 || d < 2;
};
for (let r = 0; r < N; r++) {
  for (let c = 0; c < N; c++) {
    let on = rnd() < .5;
    const fr = r < 8 ? r : r > N - 9 ? N - 1 - r : -1;
    const fc = c < 8 ? c : c > N - 9 ? N - 1 - c : -1;
    if (fr >= 0 && fc >= 0 && !(r > 40 && c > 40)) on = fr < 7 && fc < 7 && finder(fr, fc);
    else if (r == 6 || c == 6) on = (r + c) % 2 == 0;
    [[6, 28], [28, 6], [50, 50], [28, 50], [50, 28]].forEach(([a, b]) => {
      const d = Math.max(Math.abs(r - a), Math.abs(c - b));
      if (d < 3) on = d != 1;
    });
    if (Math.abs(r - 28) < 6.5 && Math.abs(c - 28) < 6.5) on = false;
    if (on) q += `M${(8 + c * M).toFixed(2)} ${(8 + r * M).toFixed(2)}h${M.toFixed(2)}v${M.toFixed(2)}h-${M.toFixed(2)}z`;
  }
}
q += '" fill="#000" shape-rendering="crispEdges"/><svg x="87" y="87" width="34" height="34"><use href="#east-logo" width="34" height="34"/></svg>';
document.querySelector('#qr').innerHTML = q;
```
